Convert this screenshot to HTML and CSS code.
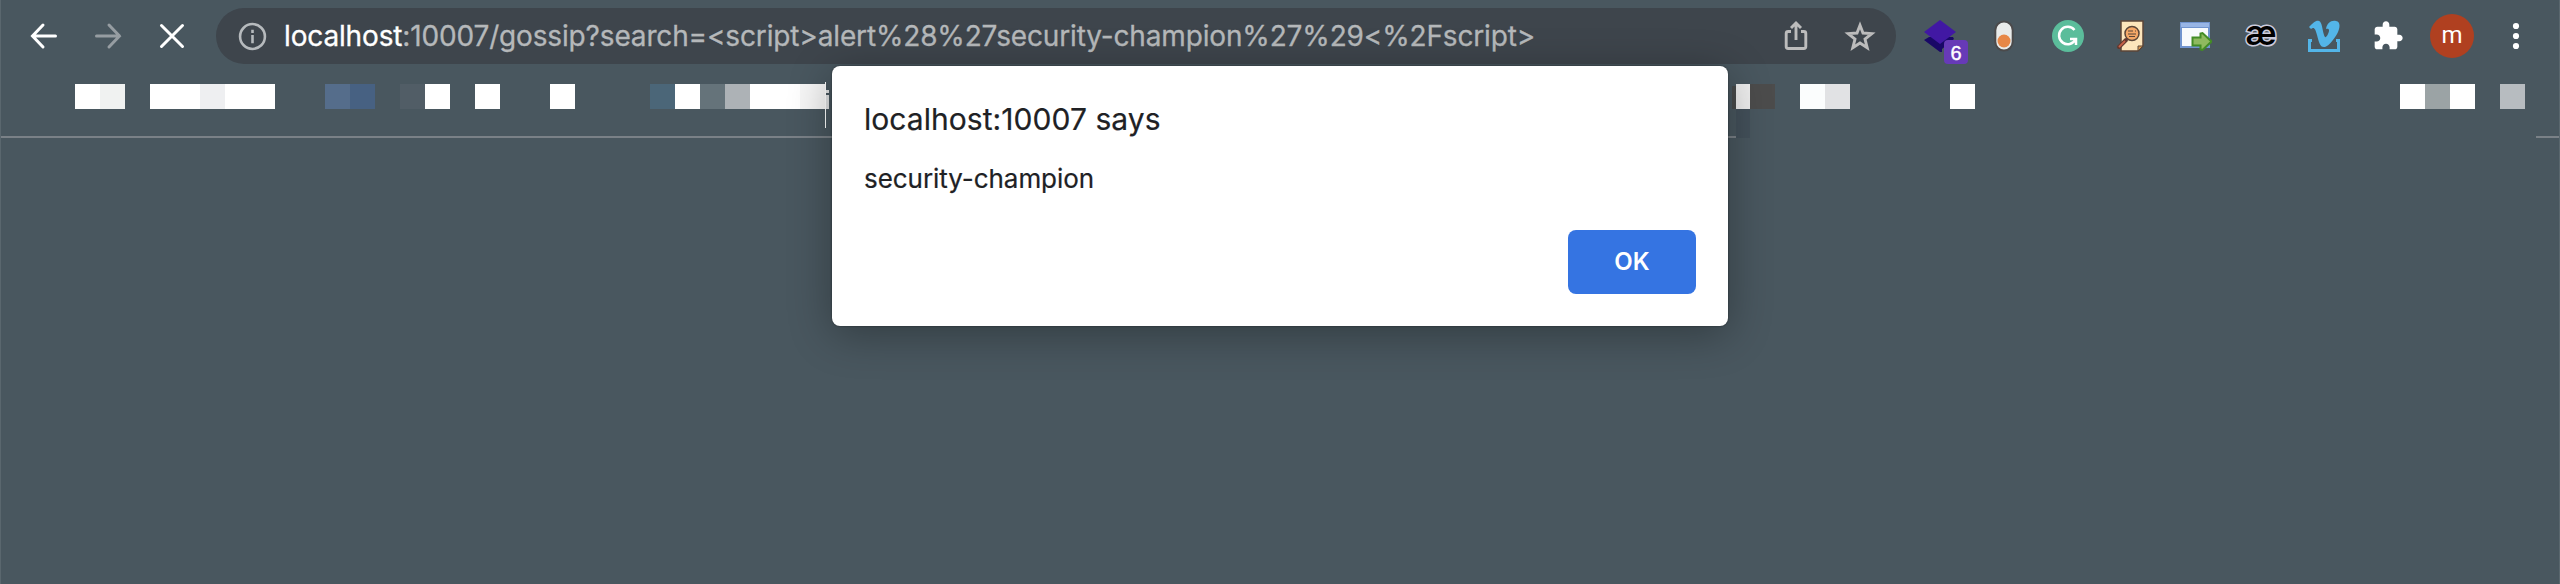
FILE: index.html
```html
<!DOCTYPE html>
<html lang="en">
<head>
<meta charset="utf-8">
<title>localhost:10007</title>
<link rel="stylesheet" href="styles.css">
</head>
<body>
<div class="browser">
  <header class="toolbar">
    <nav class="nav">
      <svg class="nav-icon" viewBox="0 0 32 32"><path d="M27.500 16H4.500M15 5 4.500 16 15 27"/></svg>
      <svg class="nav-icon nav-icon--off" viewBox="0 0 32 32"><path d="M4.500 16h23M17 5l10.500 11L17 27"/></svg>
      <svg class="nav-icon" viewBox="0 0 32 32"><path d="m5.500 5.500 21 21M26.500 5.500l-21 21"/></svg>
    </nav>
    <div class="omnibox">
      <svg class="info" viewBox="0 0 28 28"><circle cx="14" cy="14" r="12"/><path d="M14 12.500v8M14 7.500v3"/></svg>
      <div class="url"><span class="host">localhost</span>:10007/gossip?search=&lt;script&gt;alert%28%27security-champion%27%29&lt;%2Fscript&gt;</div>
      <svg class="action" viewBox="0 0 32 32"><path d="M11 11.500H8.200Q6.200 11.500 6.200 13.500v13Q6.200 28.500 8.200 28.500h15.600Q25.800 28.500 25.800 26.500v-13Q25.800 11.500 23.800 11.500H21M16 20V3.500M11 8l5-5 5 5"/></svg>
      <svg class="action" viewBox="0 0 32 32"><path d="m16 5.200 3 7.800 8.800.6-6.800 5.500 2.200 8.700L16 23l-7.200 4.800L11 19.100l-6.800-5.500L13 13z"/></svg>
    </div>
    <div class="extensions">
      <div class="ext">
        <svg viewBox="0 0 32 32"><path fill="#190867" d="m0 20 5-3h24l1 2-12 10v3h-2z"/><path fill="#4118a3" d="m16 0 16 12-16 12L0 12z"/></svg>
        <span class="badge">6</span>
      </div>
      <div class="ext"><svg viewBox="0 0 32 32"><rect x="7.300" y="1.500" width="17.400" height="29" rx="8.700" fill="#e9ebea" stroke="#4b4a4b" stroke-width="2"/><circle cx="16" cy="21" r="6.500" fill="#e78747"/></svg></div>
      <div class="ext"><svg viewBox="0 0 32 32"><circle cx="16" cy="16" r="16" fill="#5bbd9b"/><path d="M22.500 10A8.700 8.700 0 1 0 23.500 19.500M18 19h6v6" fill="none" stroke="#fff" stroke-width="2.500"/></svg></div>
      <div class="ext"><svg viewBox="0 0 32 32"><path d="M5 1h22v25l-5 5H5z" fill="#fce5bb" stroke="#5b4638" stroke-width="1.500"/><path d="M27 26h-5v5z" fill="#d89a55" stroke="#5b4638"/><circle cx="16" cy="13.500" r="7" fill="#f5a867" stroke="#5b4638" stroke-width="1.500"/><path d="M12 11h5m2 0h1M12 14h8m-7 2.500h6" stroke="#5b4638" stroke-width="1.200"/><path d="m10 20-7 7" stroke="#63392f" stroke-width="4" stroke-linecap="round"/><path d="m9 21-6 6" stroke="#c66248" stroke-width="1.800"/></svg></div>
      <div class="ext"><svg viewBox="0 0 32 32"><path fill="#7194ce" d="M0 2h30v26H0z"/><path fill="#98b5e5" d="M1 3h28v4H1z"/><path fill="#f8fafc" d="M2 8h26v18H2z"/><path d="M12.500 17.500h8v-4l2-.5 9 8.500-9 8.500-2-.5v-4h-8z" fill="#8fb95f" stroke="#438c25" stroke-width="2"/></svg></div>
      <div class="ext"><span class="ae">æ</span></div>
      <div class="ext"><svg viewBox="0 0 32 32"><path fill="#53b5e8" d="M1 7C5 3 8 0 11 1c3 1 3 7 5 14 1 3 2 3 4-1 2-4 1-6-2-5 1-6 5-9 10-8 5 1 4 7 1 13-3 5-8 12-12 13-5 1-6-5-8-12C7 8 6 7 3 9z"/><path d="M4 20.500H1.500v10h29v-10H28" fill="none" stroke="#53b5e8" stroke-width="3"/></svg></div>
      <div class="ext"><svg viewBox="0 0 24 24"><path fill="#fff" d="M20.500 11H19V7c0-1.100-.9-2-2-2h-4V3.500C13 2.120 11.880 1 10.500 1S8 2.120 8 3.500V5H4c-1.100 0-1.990.9-1.990 2v3.800H3.500c1.490 0 2.700 1.210 2.700 2.700s-1.210 2.700-2.700 2.700H2V20c0 1.100.9 2 2 2h3.800v-1.500c0-1.490 1.210-2.700 2.700-2.700s2.700 1.210 2.700 2.700V22H17c1.100 0 2-.9 2-2v-4h1.500c1.380 0 2.500-1.120 2.500-2.500S21.880 11 20.500 11z"/></svg></div>
      <div class="ext"><span class="avatar">m</span></div>
      <div class="ext"><svg viewBox="0 0 32 32" fill="#fff"><circle cx="16" cy="6" r="3.100"/><circle cx="16" cy="16" r="3.100"/><circle cx="16" cy="26" r="3.100"/></svg></div>
    </div>
  </header>
  <div class="bookmarks">
    <svg class="tiles" viewBox="0 0 2560 74" shape-rendering="crispEdges">
      <g fill="#fff"><path d="M75 20h25v25H75zM150 20h125v25H150zM425 20h25v25h-25zM475 20h25v25h-25zM550 20h25v25h-25zM675 20h25v25h-25zM750 20h50v25h-50zM1950 20h25v25h-25zM2400 20h75v25h-75zM825 18h1v46h-1z"/></g>
      <path fill="#f0f2f1" d="M100 20h25v25h-25z"/>
      <path fill="#eeeff1" d="M200 20h25v25h-25z"/>
      <path fill="#556d8b" d="M325 20h25v25h-25z"/>
      <path fill="#476182" d="M350 20h25v25h-25z"/>
      <path fill="#515d66" d="M400 20h25v25h-25z"/>
      <path fill="#4b6678" d="M650 20h25v25h-25z"/>
      <path fill="#65737a" d="M700 20h25v25h-25z"/>
      <path fill="#adb2b6" d="M725 20h25v25h-25z"/>
      <path fill="#f6f6f6" d="M800 20h25v25h-25z"/>
      <path fill="#dfe1e2" d="M826 31h3v14h-3zM826 26h3v3h-3z"/>
      <path fill="#484a4a" d="M1732 22h4v23h-4z"/>
      <path fill="#eee" d="M1736 20h14v25h-14z"/>
      <path fill="#4c4c4c" d="M1750 20h25v25h-25z"/>
      <path fill="#fbfdfd" d="M1800 20h25v25h-25z"/>
      <path fill="#e1e2e4" d="M1825 20h25v25h-25z"/>
      <path fill="#9ba3a5" d="M2425 20h25v25h-25z"/>
      <path fill="#b7bcc0" d="M2500 20h25v25h-25z"/>
      <path fill="#43505a" d="M1736 45h14v29h-14z"/>
      <path fill="#7a8187" d="M0 72h1736v2H0zM2536 72h24v2h-24z"/>
    </svg>
  </div>
  <main class="dialog" role="alertdialog">
    <h1 class="dialog-title">localhost:10007 says</h1>
    <p class="dialog-text">security-champion</p>
    <button class="ok">OK</button>
  </main>
</div>
</body>
</html>
```
FILE: styles.css
```css
* { box-sizing: border-box; }
body { margin: 0; background: #49575f; font-family: Inter, "Liberation Sans", sans-serif; }
.browser { position: relative; height: 584px; overflow: hidden; border: solid #5a676e; border-width: 0 1px; background: #49575f; }
.toolbar { display: flex; height: 64px; padding-top: 8px; margin: 0 -1px; }
.nav { display: flex; align-items: center; gap: 32px; width: 216px; padding-left: 28px; }
.nav-icon { width: 32px; height: 32px; fill: none; stroke: #fff; stroke-width: 3; stroke-linecap: round; }
.nav-icon--off { stroke: #969da2; }
.omnibox { display: flex; align-items: center; width: 1680px; height: 56px; padding: 0 20px 0 22px; border-radius: 28px; background: #3e454c; }
.info { width: 29px; height: 29px; fill: none; stroke: #b6babd; stroke-width: 2.500px; }
.url { flex: 1; padding-left: 17px; font-size: 28px; letter-spacing: -.15px; white-space: nowrap; color: #b5b8ba; -webkit-text-stroke: .3px currentColor; }
.host { color: #fff; }
.action { width: 32px; height: 32px; margin-left: 32px; fill: none; stroke: #bcbcbc; stroke-width: 2.900px; }
.extensions { display: flex; align-items: center; gap: 32px; padding-left: 28px; }
.ext { position: relative; display: flex; align-items: center; justify-content: center; width: 32px; height: 32px; }
.ext svg { flex: none; width: 32px; height: 32px; }
.badge { position: absolute; left: 20px; top: 20px; width: 24px; height: 24px; border-radius: 4px; background: #673ab7; color: #fff; font: 500 20px/27px "Liberation Sans", sans-serif; text-align: center; -webkit-text-stroke: .4px #fff; }
.ae { padding-bottom: 7px; color: #000; font: 600 34px/32px Inter, sans-serif; -webkit-text-stroke: 3px #ccd; paint-order: stroke fill; letter-spacing: -2px; }
.avatar { flex: none; width: 44px; height: 44px; border-radius: 50%; background: #b04020; color: #fff; font: 24px/43px Roboto, sans-serif; text-align: center; }
.bookmarks { height: 74px; margin: 0 -1px; }
.tiles { display: block; width: 2560px; height: 74px; }
.dialog { position: absolute; left: 831px; top: 66px; width: 896px; height: 260px; padding: 33px 32px 32px; display: flex; flex-direction: column; border-radius: 8px; background: #fff; color: #202124; box-shadow: 0 0 2px rgba(0,0,0,.5), 0 8px 44px rgba(0,0,0,.32); }
.dialog-title { margin: 0; font-size: 30px; line-height: 40px; font-weight: 400; letter-spacing: .05px; -webkit-text-stroke: .2px currentColor; }
.dialog-text { margin: 22px 0 0; font-size: 26px; line-height: 36px; letter-spacing: -.05px; -webkit-text-stroke: .2px currentColor; }
.ok { align-self: flex-end; width: 128px; height: 64px; margin-top: auto; padding: 0 0 2px; border: 0; border-radius: 8px; background: #3574e2; color: #fff; font: 600 24px Inter, sans-serif; }
```
